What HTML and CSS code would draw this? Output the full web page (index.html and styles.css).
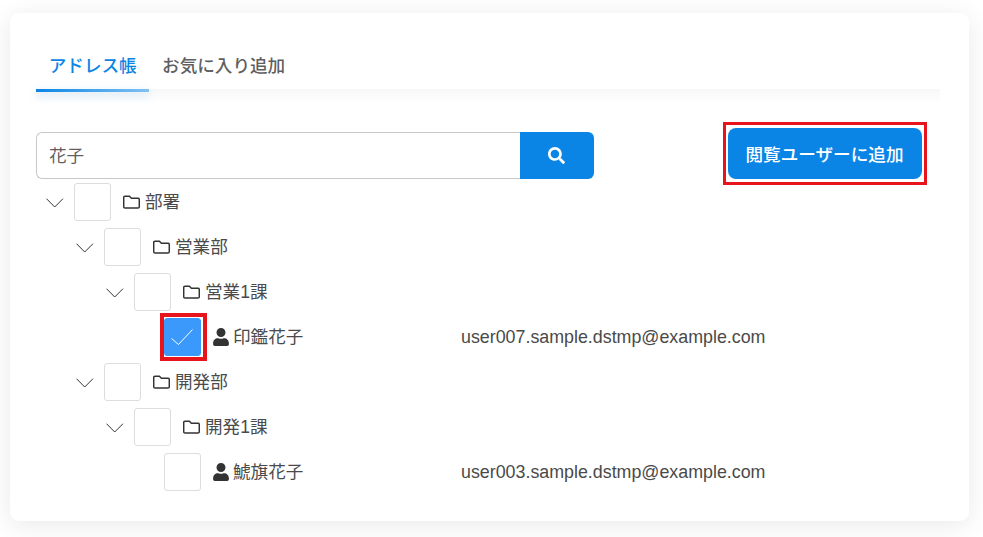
FILE: index.html
```html
<!DOCTYPE html>
<html lang="ja">
<head>
<meta charset="utf-8">
<title>アドレス帳</title>
<link rel="stylesheet" href="styles.css">
</head>
<body>
<main class="card">
  <nav class="tabs">
    <a class="tab tab-active">アドレス帳</a>
    <a class="tab">お気に入り追加</a>
  </nav>
  <div class="toolbar">
    <form class="search">
      <div class="search-input">花子</div>
      <div class="search-btn">
        <svg class="icon-search" viewBox="0 0 512 512"><path d="M505 442.7L405.3 343c-4.500-4.500-10.600-7-17-7H372c27.600-35.300 44-79.700 44-128C416 93.100 322.900 0 208 0S0 93.100 0 208s93.100 208 208 208c48.300 0 92.700-16.400 128-44v16.300c0 6.400 2.500 12.500 7 17l99.700 99.700c9.400 9.400 24.600 9.400 33.900 0l28.300-28.300c9.400-9.400 9.400-24.600.1-34zM208 336c-70.700 0-128-57.200-128-128 0-70.700 57.200-128 128-128 70.700 0 128 57.200 128 128 0 70.700-57.200 128-128 128z"/></svg>
      </div>
    </form>
    <div class="add-btn highlight-btn">閲覧ユーザーに追加</div>
  </div>
  <ul class="tree">
    <li class="row">
      <svg class="chevron" viewBox="0 0 18 10"><path d="M.5.7 8.700 9 17 .7"/></svg>
      <span class="check"></span>
      <svg class="folder" viewBox="0 0 17 14"><path d="M2 1.200h4.400l2 2H15a1.300 1.300 0 0 1 1.300 1.300v7.200A1.300 1.300 0 0 1 15 13H2A1.300 1.300 0 0 1 .7 11.700V2.500A1.300 1.300 0 0 1 2 1.200Z"/></svg>
      <span class="label">部署</span>
    </li>
    <li class="row level-1">
      <svg class="chevron" viewBox="0 0 18 10"><path d="M.5.7 8.700 9 17 .7"/></svg>
      <span class="check"></span>
      <svg class="folder" viewBox="0 0 17 14"><path d="M2 1.200h4.400l2 2H15a1.300 1.300 0 0 1 1.300 1.300v7.200A1.300 1.300 0 0 1 15 13H2A1.300 1.300 0 0 1 .7 11.700V2.500A1.300 1.300 0 0 1 2 1.200Z"/></svg>
      <span class="label">営業部</span>
    </li>
    <li class="row level-2">
      <svg class="chevron" viewBox="0 0 18 10"><path d="M.5.7 8.700 9 17 .7"/></svg>
      <span class="check"></span>
      <svg class="folder" viewBox="0 0 17 14"><path d="M2 1.200h4.400l2 2H15a1.300 1.300 0 0 1 1.300 1.300v7.200A1.300 1.300 0 0 1 15 13H2A1.300 1.300 0 0 1 .7 11.700V2.500A1.300 1.300 0 0 1 2 1.200Z"/></svg>
      <span class="label">営業1課</span>
    </li>
    <li class="row level-3">
      <span class="chevron-space"></span>
      <span class="check check-on">
        <svg class="tick" viewBox="0 0 22 16"><path d="M.5 9.500 7.500 15.500 21.500 .5"/></svg>
      </span>
      <svg class="person" viewBox="0 0 448 512"><path d="M224 256c70.700 0 128-57.300 128-128S294.700 0 224 0 96 57.300 96 128s57.300 128 128 128zm89.600 32h-16.700c-22.200 10.200-46.900 16-72.900 16s-50.600-5.800-72.900-16h-16.700C60.200 288 0 348.200 0 422.400V464c0 26.500 21.500 48 48 48h352c26.500 0 48-21.500 48-48v-41.600c0-74.200-60.200-134.400-134.400-134.400z"/></svg>
      <span class="label name">印鑑花子</span>
      <span class="mail">user007.sample.dstmp@example.com</span>
    </li>
    <li class="row level-1">
      <svg class="chevron" viewBox="0 0 18 10"><path d="M.5.7 8.700 9 17 .7"/></svg>
      <span class="check"></span>
      <svg class="folder" viewBox="0 0 17 14"><path d="M2 1.200h4.400l2 2H15a1.300 1.300 0 0 1 1.300 1.300v7.200A1.300 1.300 0 0 1 15 13H2A1.300 1.300 0 0 1 .7 11.700V2.500A1.300 1.300 0 0 1 2 1.200Z"/></svg>
      <span class="label">開発部</span>
    </li>
    <li class="row level-2">
      <svg class="chevron" viewBox="0 0 18 10"><path d="M.5.7 8.700 9 17 .7"/></svg>
      <span class="check"></span>
      <svg class="folder" viewBox="0 0 17 14"><path d="M2 1.200h4.400l2 2H15a1.300 1.300 0 0 1 1.300 1.300v7.200A1.300 1.300 0 0 1 15 13H2A1.300 1.300 0 0 1 .7 11.700V2.500A1.300 1.300 0 0 1 2 1.200Z"/></svg>
      <span class="label">開発1課</span>
    </li>
    <li class="row level-3">
      <span class="chevron-space"></span>
      <span class="check"></span>
      <svg class="person" viewBox="0 0 448 512"><path d="M224 256c70.700 0 128-57.300 128-128S294.700 0 224 0 96 57.300 96 128s57.300 128 128 128zm89.600 32h-16.700c-22.200 10.200-46.900 16-72.900 16s-50.600-5.800-72.900-16h-16.700C60.200 288 0 348.200 0 422.400V464c0 26.500 21.500 48 48 48h352c26.500 0 48-21.500 48-48v-41.600c0-74.200-60.200-134.400-134.400-134.400z"/></svg>
      <span class="label name">鯱旗花子</span>
      <span class="mail">user003.sample.dstmp@example.com</span>
    </li>
  </ul>
</main>
</body>
</html>
```

FILE: styles.css
```css
* { box-sizing: border-box; }
html, body { height: 100%; }
body {
  margin: 0;
  padding: 13px 14px 16px 10px;
  background: #fff;
  color: #333;
  font-family: "Liberation Sans", "Noto Sans CJK JP", sans-serif;
  font-size: 17.6px;
  overflow: hidden;
}
.card {
  height: 508px;
  padding: 27px 29px 0 26px;
  background: #fff;
  border-radius: 9px;
  box-shadow: 0 4px 26px rgba(0, 0, 0, .09);
}
.tabs {
  display: flex;
  height: 52px;
  margin-bottom: 40px;
  position: relative;
}
.tabs::after {
  content: "";
  position: absolute;
  left: 0; right: 0; top: 49px;
  height: 14px;
  background: linear-gradient(#f8f8f8, #fff);
}
.tab {
  position: relative;
  z-index: 1;
  display: flex;
  align-items: center;
  padding: 0 12.7px 4px;
  height: 52px;
  color: #5f5f5f;
  font-weight: 500;
}
.tab-active { color: #0b85e5; }
.tab-active::after {
  content: "";
  position: absolute;
  left: 0; right: 0; bottom: 0;
  height: 3px;
  background: linear-gradient(90deg, #0b85e5, #82c2f3);
  box-shadow: 0 3px 10px rgba(11, 133, 229, .25);
}
.toolbar {
  display: flex;
  justify-content: space-between;
  align-items: flex-end;
  margin-top: -4px;
  padding-right: 18px;
  height: 51px;
}
.search { display: flex; width: 558px; height: 47px; }
.search-input {
  flex: 1;
  display: flex;
  align-items: center;
  padding: 0 0 2px 12px;
  border: 1px solid #c8c8c8;
  border-right: 0;
  border-radius: 6px 0 0 6px;
  color: #5f5f5f;
}
.search-btn {
  width: 74px;
  display: flex;
  align-items: center;
  justify-content: center;
  padding-right: 1px;
  background: #0b85e5;
  border-radius: 0 6px 6px 0;
}
.icon-search { width: 17px; height: 17px; fill: #fff; }
.add-btn {
  position: relative;
  display: flex;
  align-items: center;
  justify-content: center;
  width: 194px;
  height: 51px;
  padding-right: 1px;
  background: #0b85e5;
  border-radius: 8px;
  color: #fff;
  font-weight: 500;
}
.highlight-btn::after {
  content: "";
  position: absolute;
  inset: -6px -5px;
  border: 3px solid #e8141c;
}
.tree { list-style: none; margin: 4px 0 0; padding: 0; }
.row { display: flex; align-items: center; height: 38px; margin-bottom: 7px; }
.level-1 { padding-left: 30px; }
.level-2 { padding-left: 60px; }
.level-3 { padding-left: 90px; }
.chevron {
  flex: none;
  width: 18px;
  height: 10px;
  margin: 2px 10px 0 10px;
  fill: none;
  stroke: #333;
  stroke-width: 1;
}
.chevron-space { flex: none; width: 38px; }
.check {
  flex: none;
  display: flex;
  align-items: center;
  justify-content: center;
  position: relative;
  width: 37px;
  height: 38px;
  border: 1px solid #ddd;
  border-radius: 3px;
  background: #fff;
}
.check-on { background: #3b99fc; border-color: #3b99fc; }
.check-on::after {
  content: "";
  position: absolute;
  inset: -6px -7px -6px -5px;
  border: 4px solid #e8141c;
}
.tick { width: 22px; height: 16px; margin-right: 2px; fill: none; stroke: #fff; stroke-width: 1; }
.folder {
  flex: none;
  width: 17px;
  height: 14px;
  margin-left: 12px;
  margin-right: 5px;
  fill: none;
  stroke: #333;
  stroke-width: 1.5;
}
.person { flex: none; width: 16px; height: 18px; margin-left: 12px; margin-right: 4px; fill: #333; }
.label { color: #4a4a4a; padding-bottom: 4px; }
.name { width: 228px; }
.mail { color: #4a4a4a; font-size: 17.84px; }
```
